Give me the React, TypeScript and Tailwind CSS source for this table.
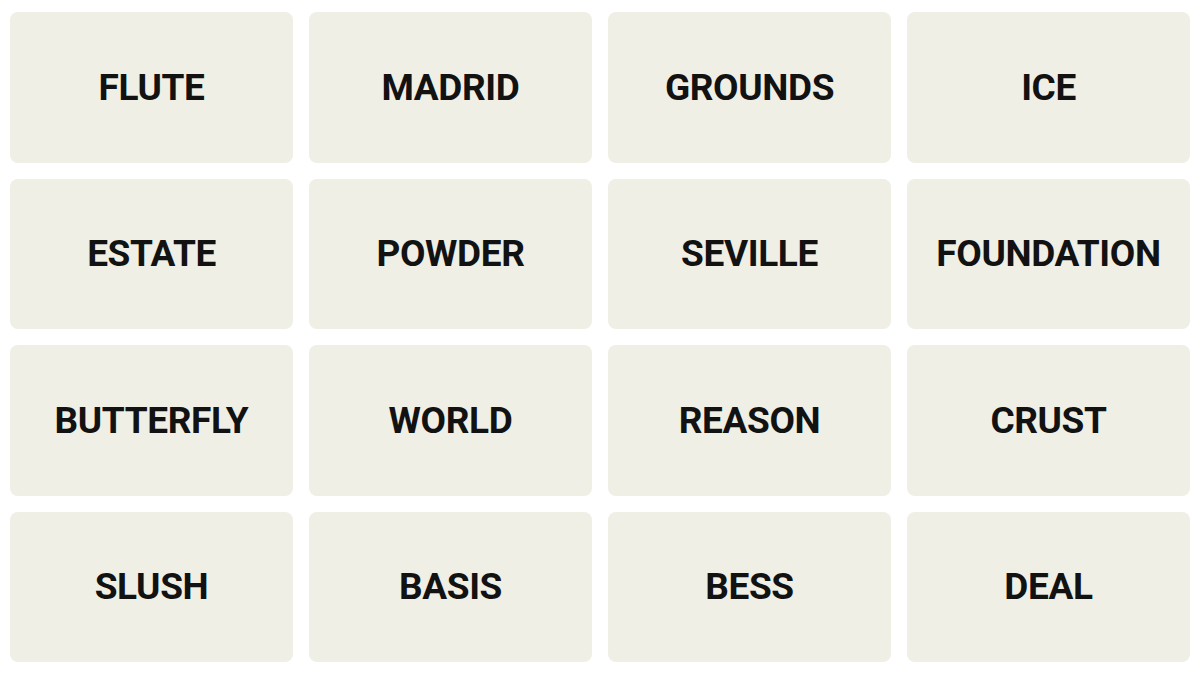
const words = [
  'FLUTE', 'MADRID', 'GROUNDS', 'ICE',
  'ESTATE', 'POWDER', 'SEVILLE', 'FOUNDATION',
  'BUTTERFLY', 'WORLD', 'REASON', 'CRUST',
  'SLUSH', 'BASIS', 'BESS', 'DEAL',
]

function App() {
  return (
    <div className="w-[1200px] h-[675px] bg-white pl-[10px] pr-[10px] pt-[12px]">
      <div className="grid grid-cols-4 auto-rows-[150.5px] gap-x-4 gap-y-4">
        {words.map((word) => (
          <div
            key={word}
            className="flex items-center justify-center rounded-lg bg-[#efefe6] text-[#121212] font-bold text-[37px] tracking-[-0.01em] font-['Roboto',sans-serif] select-none"
          >
            {word}
          </div>
        ))}
      </div>
    </div>
  )
}

export default App
